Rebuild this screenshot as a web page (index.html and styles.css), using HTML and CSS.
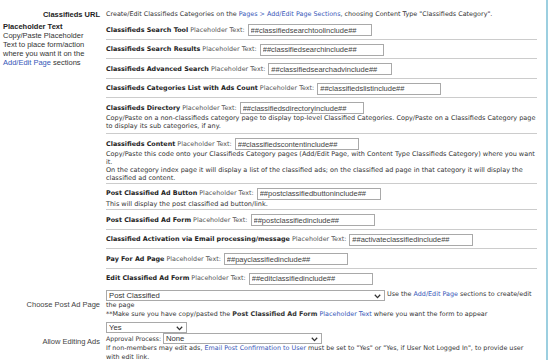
FILE: index.html
```
<!DOCTYPE html>
<html>
<head>
    <title>Classifieds Settings</title>
    <link rel="stylesheet" href="styles.css">
</head>
<body>
<div class="page">
    <div class="row url-row">
        <div class="label label-strong">Classifieds URL</div>
        <div class="cell">Create/Edit Classifieds Categories on the <a href="#">Pages &gt; Add/Edit Page Sections</a>, choosing Content Type "Classifieds Category".</div>
    </div>

    <div class="row">
        <div class="note">
            <b>Placeholder Text</b><br>
            Copy/Paste Placeholder Text to place form/action where you want it on the <a href="#">Add/Edit Page</a> sections
        </div>
        <div class="sections">
            <div class="section">
                <div class="field"><b>Classifieds Search Tool</b> <span class="hint">Placeholder Text:</span> <input class="code" type="text" value="##classifiedsearchtoolinclude##"></div>
            </div>
            <div class="section">
                <div class="field"><b>Classifieds Search Results</b> <span class="hint">Placeholder Text:</span> <input class="code" type="text" value="##classifiedsearchinclude##"></div>
            </div>
            <div class="section">
                <div class="field"><b>Classifieds Advanced Search</b> <span class="hint">Placeholder Text:</span> <input class="code" type="text" value="##classifiedsearchadvinclude##"></div>
            </div>
            <div class="section">
                <div class="field"><b>Classifieds Categories List with Ads Count</b> <span class="hint">Placeholder Text:</span> <input class="code" type="text" value="##classifiedslistinclude##"></div>
            </div>
            <div class="section with-desc directory">
                <div class="field"><b>Classifieds Directory</b> <span class="hint">Placeholder Text:</span> <input class="code" type="text" value="##classifiedsdirectoryinclude##"></div>
                <p class="desc">Copy/Paste on a non-classifieds category page to display top-level Classified Categories. Copy/Paste on a Classifieds Category page to display its sub categories, if any.</p>
            </div>
            <div class="section with-desc content">
                <div class="field"><b>Classifieds Content</b> <span class="hint">Placeholder Text:</span> <input class="code" type="text" value="##classifiedscontentinclude##"></div>
                <p class="desc">Copy/Paste this code onto your Classifieds Category pages (Add/Edit Page, with Content Type Classifieds Category) where you want<br>it.<br>On the category index page it will display a list of the classified ads; on the classified ad page in that category it will display the classified ad content.</p>
            </div>
            <div class="section with-desc">
                <div class="field"><b>Post Classified Ad Button</b> <span class="hint">Placeholder Text:</span> <input class="code" type="text" value="##postclassifiedbuttoninclude##"></div>
                <p class="desc">This will display the post classified ad button/link.</p>
            </div>
            <div class="section">
                <div class="field"><b>Post Classified Ad Form</b> <span class="hint">Placeholder Text:</span> <input class="code" type="text" value="##postclassifiedinclude##"></div>
            </div>
            <div class="section">
                <div class="field"><b>Classified Activation via Email processing/message</b> <span class="hint">Placeholder Text:</span> <input class="code" type="text" value="##activateclassifiedinclude##"></div>
            </div>
            <div class="section">
                <div class="field"><b>Pay For Ad Page</b> <span class="hint">Placeholder Text:</span> <input class="code" type="text" value="##payclassifiedinclude##"></div>
            </div>
            <div class="section">
                <div class="field"><b>Edit Classified Ad Form</b> <span class="hint">Placeholder Text:</span> <input class="code" type="text" value="##editclassifiedinclude##"></div>
            </div>
        </div>
    </div>

    <div class="row option-row">
        <div class="label">Choose Post Ad Page</div>
        <div class="cell">
            <span class="select select-page">
                <select><option>Post Classified</option></select>
                <svg class="chev" viewBox="0 0 7 5"><polyline points="0.8,0.8 3.5,3.6 6.2,0.8"/></svg>
            </span>
            Use the <a href="#">Add/Edit Page</a> sections to create/edit the page<br>
            **Make sure you have copy/pasted the <b>Post Classified Ad Form</b> <a href="#">Placeholder Text</a> where you want the form to appear
        </div>
    </div>

    <div class="row option-row">
        <div class="label">Allow Editing Ads</div>
        <div class="cell">
            <div class="line">
                <span class="select select-yes">
                    <select><option>Yes</option></select>
                    <svg class="chev" viewBox="0 0 7 5"><polyline points="0.8,0.8 3.5,3.6 6.2,0.8"/></svg>
                </span>
            </div>
            <div class="line">
                <span class="small">Approval Process:</span>
                <span class="select select-none">
                    <select><option>None</option></select>
                    <svg class="chev" viewBox="0 0 7 5"><polyline points="0.8,0.8 3.5,3.6 6.2,0.8"/></svg>
                </span>
            </div>
            <div class="fine">If non-members may edit ads, <a href="#">Email Post Confirmation to User</a> must be set to "Yes" or "Yes, if User Not Logged In", to provide user with edit link.</div>
        </div>
    </div>
</div>
</body>
</html>
```

FILE: styles.css
```
body {
    margin: 0;
    background-color: #fff;
}
.page {
    width: 548px;
    height: 360px;
    overflow: hidden;
    box-sizing: border-box;
    border-right: 2px solid #9ccfe0;
    padding: 10px 9px 0 3px;
    font-family: "DejaVu Sans", Verdana, sans-serif;
    font-size: 6.4px;
    line-height: 9px;
    color: #333;
}
a {
    color: #3656b8;
    text-decoration: none;
}
.row {
    display: grid;
    grid-template-columns: 97px 431px;
    column-gap: 6px;
}
.url-row {
    margin-bottom: 1px;
}
.label {
    font-family: "Liberation Sans", Arial, sans-serif;
    font-size: 7.5px;
    text-align: right;
    align-self: center;
    color: #444;
}
.label-strong {
    font-weight: bold;
    color: #222;
}
.note {
    font-family: "Liberation Sans", Arial, sans-serif;
    font-size: 7.5px;
    line-height: 9px;
    padding: 2px 8px 0 0;
    color: #333;
}
.note b {
    color: #222;
}
.section {
    padding: 4px 0 2.5px;
    border-bottom: 1px solid #ccc;
}
.section.with-desc {
    padding-bottom: 1.5px;
}
.section.directory {
    padding-bottom: 3px;
}
.section.content {
    padding-bottom: 0.5px;
}
.section:last-child {
    border-bottom: none;
}
.field {
    display: flex;
    align-items: center;
    gap: 2px;
    height: 12px;
    white-space: nowrap;
}
.field b {
    color: #222;
}
.hint {
    color: #555;
}
input.code {
    width: 124px;
    height: 12px;
    box-sizing: border-box;
    margin: 0 0 0 1px;
    border: 1px solid #a9a9a9;
    padding: 0 2px;
    font-family: "Liberation Sans", Arial, sans-serif;
    font-size: 7.5px;
    color: #444;
    background-color: #fff;
}
.desc {
    margin: 0;
    font-size: 6.5px;
    line-height: 8px;
}
.option-row {
    margin-top: 3px;
}
.line {
    display: flex;
    align-items: center;
    gap: 2px;
    height: 11px;
}
.small {
    font-size: 6.2px;
}
.fine {
    line-height: 8.5px;
}
.select {
    position: relative;
    display: inline-block;
    vertical-align: top;
}
.select select {
    appearance: none;
    display: block;
    width: 100%;
    height: 11px;
    box-sizing: border-box;
    margin: 0;
    border: 1px solid #a9a9a9;
    border-radius: 0;
    padding: 0 2px;
    font-family: "Liberation Sans", Arial, sans-serif;
    font-size: 7.7px;
    line-height: 9px;
    color: #333;
    background-color: #fff;
}
.select-page {
    width: 279px;
}
.select-yes {
    width: 81px;
}
.select-none {
    width: 159px;
}
.chev {
    position: absolute;
    right: 4px;
    top: 3.5px;
    width: 7px;
    height: 5px;
    fill: none;
    stroke: #333;
    stroke-width: 1.3;
    pointer-events: none;
}
```
